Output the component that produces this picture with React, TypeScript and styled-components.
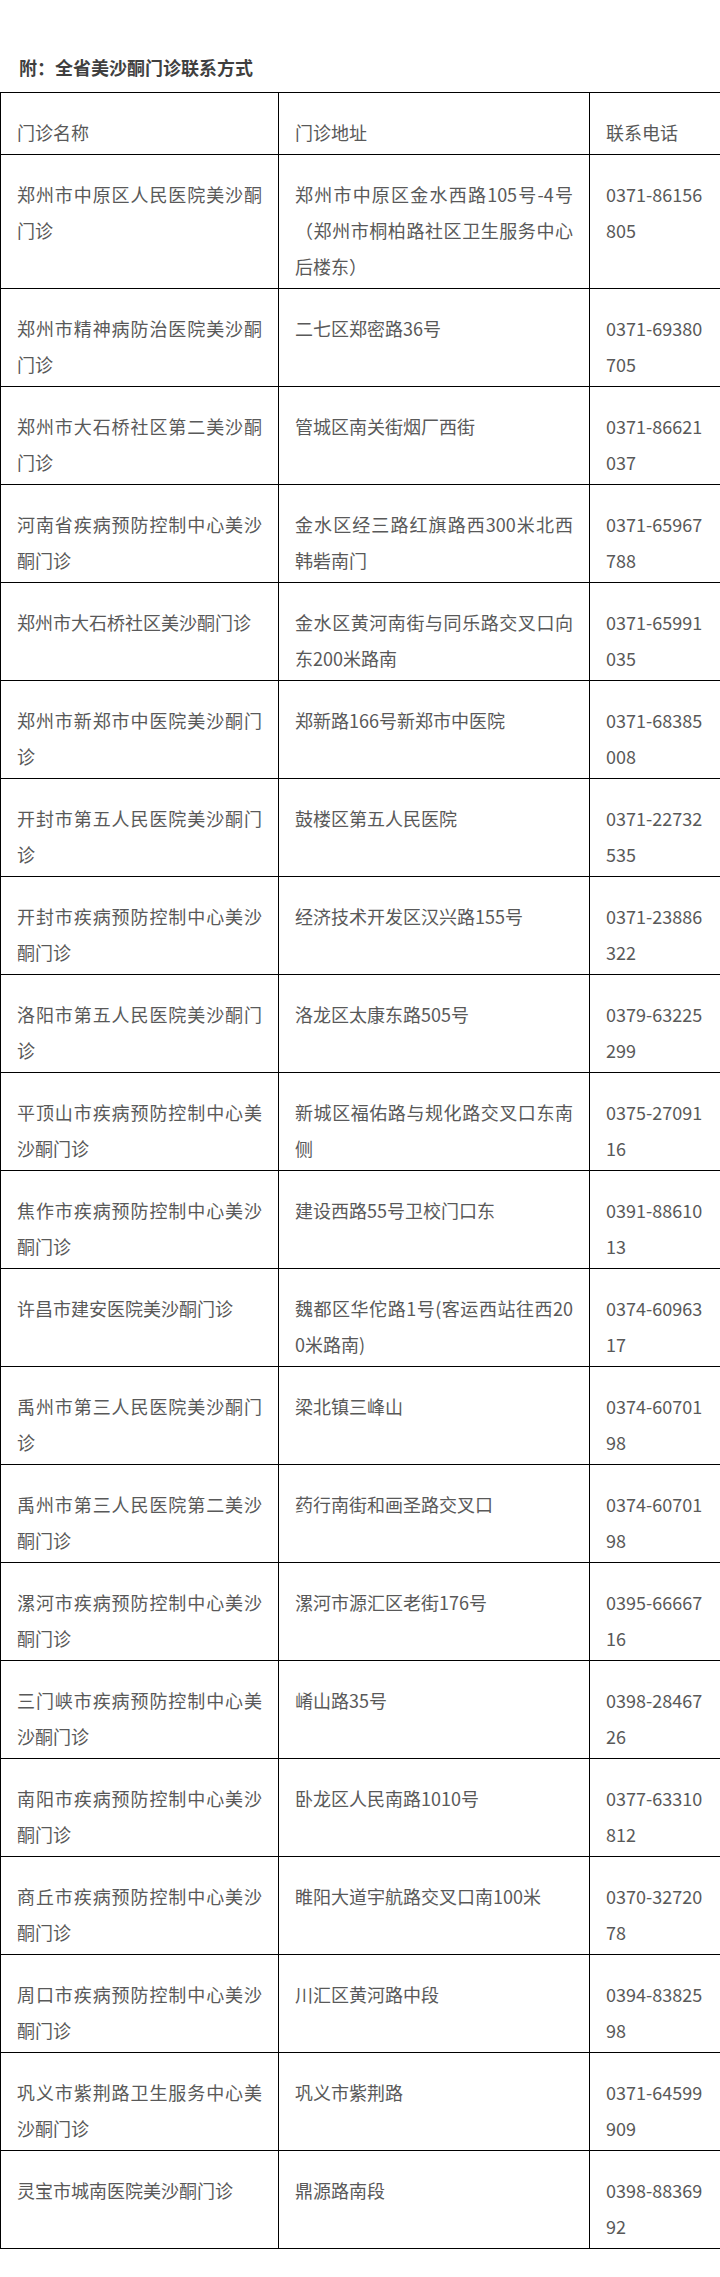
import styled, { createGlobalStyle } from "styled-components";

const GlobalStyle = createGlobalStyle`
  html, body {
    margin: 0;
    padding: 0;
    background: #fff;
  }

  body {
    font-family: "Noto Sans CJK SC", "Noto Sans", sans-serif;
  }
`;

const clinics = [
  ["郑州市中原区人民医院美沙酮门诊", "郑州市中原区金水西路105号-4号（郑州市桐柏路社区卫生服务中心后楼东）", "0371-86156805"],
  ["郑州市精神病防治医院美沙酮门诊", "二七区郑密路36号", "0371-69380705"],
  ["郑州市大石桥社区第二美沙酮门诊", "管城区南关街烟厂西街", "0371-86621037"],
  ["河南省疾病预防控制中心美沙酮门诊", "金水区经三路红旗路西300米北西韩砦南门", "0371-65967788"],
  ["郑州市大石桥社区美沙酮门诊", "金水区黄河南街与同乐路交叉口向东200米路南", "0371-65991035"],
  ["郑州市新郑市中医院美沙酮门诊", "郑新路166号新郑市中医院", "0371-68385008"],
  ["开封市第五人民医院美沙酮门诊", "鼓楼区第五人民医院", "0371-22732535"],
  ["开封市疾病预防控制中心美沙酮门诊", "经济技术开发区汉兴路155号", "0371-23886322"],
  ["洛阳市第五人民医院美沙酮门诊", "洛龙区太康东路505号", "0379-63225299"],
  ["平顶山市疾病预防控制中心美沙酮门诊", "新城区福佑路与规化路交叉口东南侧", "0375-2709116"],
  ["焦作市疾病预防控制中心美沙酮门诊", "建设西路55号卫校门口东", "0391-8861013"],
  ["许昌市建安医院美沙酮门诊", "魏都区华佗路1号(客运西站往西200米路南)", "0374-6096317"],
  ["禹州市第三人民医院美沙酮门诊", "梁北镇三峰山", "0374-6070198"],
  ["禹州市第三人民医院第二美沙酮门诊", "药行南街和画圣路交叉口", "0374-6070198"],
  ["漯河市疾病预防控制中心美沙酮门诊", "漯河市源汇区老街176号", "0395-6666716"],
  ["三门峡市疾病预防控制中心美沙酮门诊", "崤山路35号", "0398-2846726"],
  ["南阳市疾病预防控制中心美沙酮门诊", "卧龙区人民南路1010号", "0377-63310812"],
  ["商丘市疾病预防控制中心美沙酮门诊", "睢阳大道宇航路交叉口南100米", "0370-3272078"],
  ["周口市疾病预防控制中心美沙酮门诊", "川汇区黄河路中段", "0394-8382598"],
  ["巩义市紫荆路卫生服务中心美沙酮门诊", "巩义市紫荆路", "0371-64599909"],
  ["灵宝市城南医院美沙酮门诊", "鼎源路南段", "0398-8836992"],
];

const App = () => {
  return (
    <Page>
      <GlobalStyle />
      <Title>附：全省美沙酮门诊联系方式</Title>
      <Table>
        <colgroup>
          <col style={{ width: 278 }} />
          <col style={{ width: 311 }} />
          <col style={{ width: 131 }} />
        </colgroup>
        <thead>
          <tr>
            <Cell as="th">门诊名称</Cell>
            <Cell as="th">门诊地址</Cell>
            <Cell as="th">联系电话</Cell>
          </tr>
        </thead>
        <tbody>
          {clinics.map(([name, address, phone]) => (
            <tr key={name + phone}>
              <Cell>{name}</Cell>
              <Cell>{address}</Cell>
              <Cell>{phone}</Cell>
            </tr>
          ))}
        </tbody>
      </Table>
    </Page>
  );
};

const Page = styled.div`
  width: 720px;
  min-height: 2277px;
  background: #fff;
`;

const Title = styled.p`
  margin: 0;
  padding: 53px 19px 11px;
  font-size: 18px;
  line-height: 28px;
  font-weight: 700;
  color: #3f3f3f;
`;

const Table = styled.table`
  width: 720px;
  table-layout: fixed;
  border-collapse: collapse;
`;

const Cell = styled.td`
  padding: 21px 16px 4px;
  border: 1px solid #000;
  vertical-align: top;
  text-align: justify;
  font-size: 18px;
  font-weight: 400;
  line-height: 36px;
  color: #595959;
  word-break: break-all;
`;

export default App;
